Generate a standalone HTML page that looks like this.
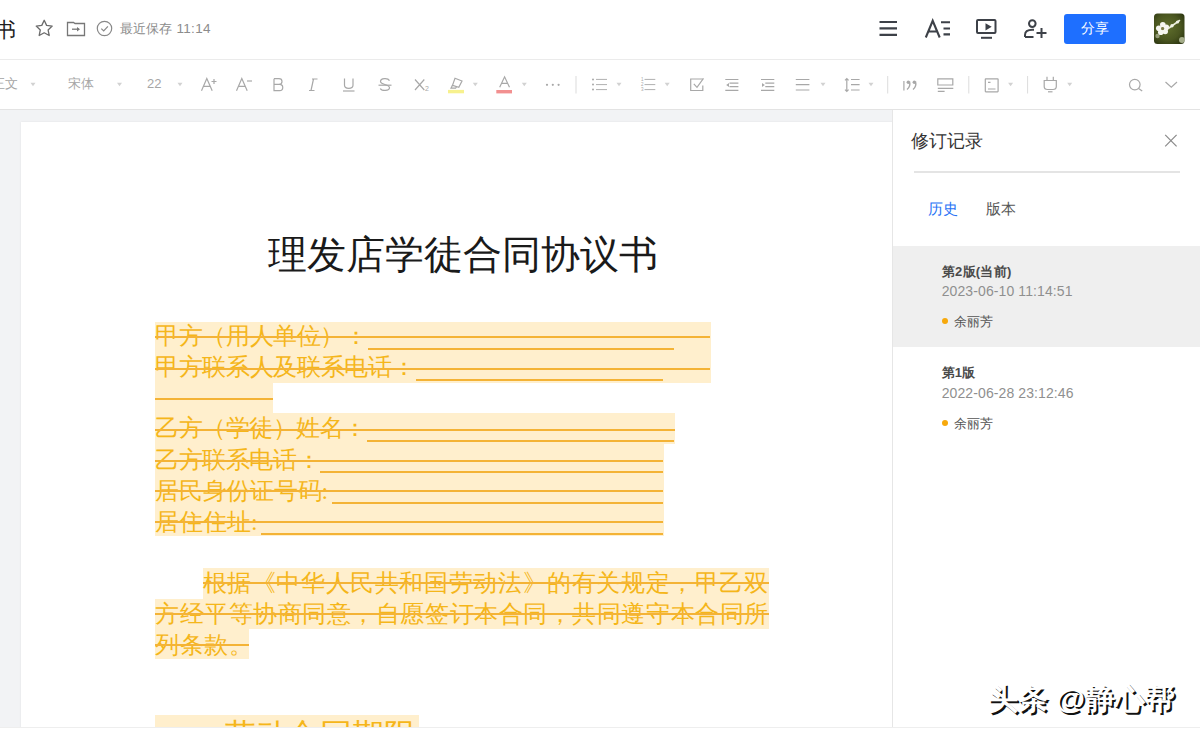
<!DOCTYPE html>
<html><head><meta charset="utf-8">
<style>
*{box-sizing:border-box;margin:0;padding:0}
html,body{width:1200px;height:737px;overflow:hidden;background:#fff;font-family:"Liberation Sans",sans-serif}
.a{position:absolute;white-space:nowrap}
#hdr{position:absolute;left:0;top:0;width:1200px;height:60px;background:#fff;border-bottom:1px solid #ebebeb}
#tb{position:absolute;left:0;top:60px;width:1200px;height:50px;background:#fff;border-bottom:1px solid #e3e3e3}
#main{position:absolute;left:0;top:110px;width:892px;height:617px;background:#f2f3f5;overflow:hidden}
#page{position:absolute;left:21px;top:12px;width:900px;height:700px;background:#fff;box-shadow:0 0 2px rgba(0,0,0,.08)}
#panel{position:absolute;left:892px;top:110px;width:308px;height:617px;background:#fff;border-left:1px solid #e6e6e6}
#foot{position:absolute;left:0;top:727px;width:1200px;height:10px;background:#fff;border-top:1px solid #eeeeee}
.tbt{font-size:13px;color:#a6a6a6;line-height:16px;top:76px}
.doc{font-family:"Liberation Serif",serif;color:#f5b61a;font-size:23.7px;line-height:23.7px}
.hl{position:absolute;background:#ffefcd}
.ln{position:absolute;height:1.6px;background:#f4b336}
.pt{font-size:13px;line-height:16px}
</style></head><body>
<div id="hdr"></div>
<div id="tb"></div>
<div id="main"><div id="page"></div></div>

<!-- document content (page coordinates) -->
<div class="a" style="left:268px;top:236px;font-family:'Liberation Serif',serif;font-size:38.8px;line-height:38.8px;color:#1a1a1a">理发店学徒合同协议书</div>

<div class="hl" style="left:154.5px;top:321.5px;width:556px;height:61px"></div>
<div class="hl" style="left:154.5px;top:382.5px;width:118px;height:30.5px"></div>
<div class="hl" style="left:154.5px;top:413px;width:520px;height:30.5px"></div>
<div class="hl" style="left:154.5px;top:443.5px;width:509px;height:92.5px"></div>

<div class="a doc" style="left:155px;top:325.2px;letter-spacing:-0.37px">甲方（用人单位）：</div>
<div class="a doc" style="left:155px;top:356.2px;letter-spacing:-0.32px">甲方联系人及联系电话：</div>
<div class="a doc" style="left:155px;top:417px;letter-spacing:-0.44px">乙方（学徒）姓名：</div>
<div class="a doc" style="left:155px;top:448.5px;letter-spacing:-0.4px">乙方联系电话：</div>
<div class="a doc" style="left:155px;top:480px;letter-spacing:-0.2px">居民身份证号码:</div>
<div class="a doc" style="left:155px;top:511px;letter-spacing:0px">居住住址:</div>

<div class="ln" style="left:155px;top:336px;width:555px"></div>
<div class="ln" style="left:367.7px;top:348px;width:306px"></div>
<div class="ln" style="left:155px;top:368px;width:555px"></div>
<div class="ln" style="left:415.5px;top:379px;width:247.5px"></div>
<div class="ln" style="left:155px;top:398px;width:117.7px;height:2px"></div>
<div class="ln" style="left:155px;top:429px;width:519.8px"></div>
<div class="ln" style="left:367.2px;top:440px;width:307px"></div>
<div class="ln" style="left:155px;top:460px;width:508px"></div>
<div class="ln" style="left:319.8px;top:471px;width:343.2px"></div>
<div class="ln" style="left:155px;top:490px;width:508px"></div>
<div class="ln" style="left:332.4px;top:502px;width:330.6px"></div>
<div class="ln" style="left:155px;top:521px;width:508px"></div>
<div class="ln" style="left:260.8px;top:533px;width:402.2px"></div>

<div class="hl" style="left:202.6px;top:568px;width:566px;height:30.5px"></div>
<div class="hl" style="left:154.5px;top:598.5px;width:614.2px;height:30.5px"></div>
<div class="hl" style="left:154.5px;top:629px;width:94.5px;height:30px"></div>
<div class="a doc" style="left:202.6px;top:572px;letter-spacing:0.61px">根据《中华人民共和国劳动法》的有关规定，甲乙双</div>
<div class="a doc" style="left:155px;top:603px;letter-spacing:0.55px">方经平等协商同意，自愿签订本合同，共同遵守本合同所</div>
<div class="a doc" style="left:155px;top:634px;letter-spacing:0.55px">列条款。</div>
<div class="ln" style="left:202.6px;top:582px;width:566px"></div>
<div class="ln" style="left:155px;top:613px;width:613.7px"></div>
<div class="ln" style="left:155px;top:644px;width:94px"></div>

<div class="hl" style="left:155px;top:714.5px;width:264px;height:20px"></div>
<div class="a doc" style="left:223.7px;top:720px;font-size:31.8px;line-height:31.8px">劳动合同期限</div>

<div id="foot"></div>

<!-- header -->
<div class="a" style="left:-5.5px;top:18.5px;font-size:20.5px;line-height:22px;color:#1f1f1f">书</div>
<div class="a" style="left:119.5px;top:21px;font-size:13px;line-height:16px;color:#8c8c8c">最近保存</div><div class="a" style="left:176.5px;top:21px;font-size:13.5px;line-height:16px;color:#8c8c8c;letter-spacing:0.3px">11:14</div>
<div class="a" style="left:1064px;top:13.5px;width:62px;height:30.5px;background:#1e6fff;border-radius:3px"></div>
<div class="a" style="left:1081px;top:21px;font-size:13.5px;line-height:16px;color:#fff">分享</div>

<!-- toolbar text -->
<div class="a tbt" style="left:-8px">正文</div>
<div class="a tbt" style="left:68px">宋体</div>
<div class="a tbt" style="left:147px">22</div>

<!-- panel -->
<div id="panel"></div>
<div class="a" style="left:911px;top:131px;font-size:18px;line-height:20px;color:#333">修订记录</div>
<div class="a" style="left:914px;top:171px;width:266px;height:1.5px;background:#e4e4e4"></div>
<div class="a" style="left:927.5px;top:200px;font-size:15px;line-height:18px;color:#2a73f5">历史</div>
<div class="a" style="left:985.5px;top:200px;font-size:15px;line-height:18px;color:#555">版本</div>
<div class="a" style="left:893px;top:246.3px;width:307px;height:101px;background:#efefef"></div>
<div class="a pt" style="left:941.7px;top:263.5px;font-weight:bold;color:#4a4a4a;letter-spacing:0.3px">第2版(当前)</div>
<div class="a pt" style="left:941.7px;top:282.5px;font-size:14px;color:#8f8f8f;letter-spacing:0.1px">2023-06-10 11:14:51</div>
<div class="a" style="left:941.5px;top:318px;width:6.4px;height:6.4px;border-radius:50%;background:#f7a90c"></div>
<div class="a pt" style="left:954px;top:313.5px;color:#555">余丽芳</div>
<div class="a pt" style="left:941.7px;top:364.5px;font-weight:bold;color:#4a4a4a">第1版</div>
<div class="a pt" style="left:941.7px;top:384.5px;font-size:14px;color:#8f8f8f;letter-spacing:0.1px">2022-06-28 23:12:46</div>
<div class="a" style="left:941.5px;top:420px;width:6.4px;height:6.4px;border-radius:50%;background:#f7a90c"></div>
<div class="a pt" style="left:954px;top:415.5px;color:#555">余丽芳</div>

<!-- watermark -->
<div class="a" style="left:987.5px;top:683px;font-size:30px;line-height:32px;font-weight:bold;color:#fff;text-shadow:2px 2px 0 #111">头条 @静心帮</div>

<!-- icons overlay -->
<svg class="a" style="left:0;top:0" width="1200" height="737" viewBox="0 0 1200 737" fill="none">
 <!-- header left icons -->
 <path d="M44.2 20.3 L46.6 25.4 L52.2 26.1 L48.1 29.9 L49.2 35.5 L44.2 32.8 L39.2 35.5 L40.3 29.9 L36.2 26.1 L41.8 25.4 Z" stroke="#6b6b6b" stroke-width="1.3" stroke-linejoin="round"/>
 <path d="M67.5 22.5 H73.5 L75 23.5 H84.5 V35.5 H67.5 Z" stroke="#777" stroke-width="1.3"/>
 <path d="M72 29.2 H79" stroke="#777" stroke-width="1.3"/><path d="M77 27 L80 29.2 L77 31.4 Z" fill="#777"/>
 <circle cx="104.5" cy="28.5" r="7.2" stroke="#888" stroke-width="1.2"/>
 <path d="M101.3 28.6 L103.7 31 L107.9 26.3" stroke="#888" stroke-width="1.2"/>
 <!-- header right icons -->
 <g stroke="#3d4148" stroke-width="2">
  <path d="M879.5 22 H897 M879.5 28.3 H897 M879.5 34.9 H897" stroke-width="2.2"/>
  <path d="M925.8 37.5 L932.7 20.8 L939.7 37.5 M928 31.5 H937.5" stroke-width="2.1"/>
  <path d="M941 22.2 H950 M943.5 28.5 H950 M943.5 34.4 H950" stroke-width="2.1"/>
  <rect x="977" y="20" width="18.5" height="13" rx="1"/>
  <path d="M981 37.8 H992"/>
  <circle cx="1032.3" cy="23.6" r="3.3"/>
  <path d="M1025 37 V35 C1025 31.5 1028 29.8 1032.5 29.8 H1034 M1025 37 H1033.5"/>
  <path d="M1036.5 33 H1046.5 M1041.5 28 V38"/>
 </g>
 <path d="M985.5 23.2 L991.7 26.8 L985.5 30.4 Z" fill="#3d4148"/>
 <!-- avatar -->
 <defs><radialGradient id="avg" cx="0.45" cy="0.45" r="0.7"><stop offset="0" stop-color="#5f6e2c"/><stop offset="0.6" stop-color="#4a5620"/><stop offset="1" stop-color="#2a3310"/></radialGradient>
 <clipPath id="avc"><rect x="1154" y="13.5" width="30.5" height="30.5" rx="3.5"/></clipPath></defs>
 <rect x="1154" y="13.5" width="30.5" height="30.5" rx="3.5" fill="url(#avg)"/>
 <g clip-path="url(#avc)">
  <g fill="#f6f6f0">
   <circle cx="1162.8" cy="24.8" r="2.8"/><circle cx="1166.3" cy="27.4" r="2.8"/><circle cx="1165.2" cy="31.5" r="2.8"/>
   <circle cx="1160.8" cy="32.2" r="2.8"/><circle cx="1158.8" cy="28.2" r="2.8"/>
  </g>
  <circle cx="1162.7" cy="28.6" r="1.5" fill="#7d7d45"/>
  <circle cx="1157.5" cy="36" r="2.2" fill="#c9cfb4" opacity="0.6"/>
  <path d="M1169 28 L1179.5 20.5" stroke="#e8ecd8" stroke-width="1.6" stroke-linecap="round"/>
  <g fill="#f0f2e6"><circle cx="1172" cy="25.8" r="1.7"/><circle cx="1177.5" cy="22" r="1.6"/></g>
  <circle cx="1182" cy="40" r="3" fill="#c2c9a8" opacity="0.8"/>
 </g>
 <!-- toolbar -->
 <g fill="#d2d2d2">
  <path d="M30.5 82.8 h5 l-2.5 3.5 z"/><path d="M117.0 82.8 h5 l-2.5 3.5 z"/><path d="M177.5 82.8 h5 l-2.5 3.5 z"/>
  <path d="M472.8 82.8 h5 l-2.5 3.5 z"/><path d="M521.8 82.8 h5 l-2.5 3.5 z"/><path d="M616.5 82.8 h5 l-2.5 3.5 z"/>
  <path d="M664.7 82.8 h5 l-2.5 3.5 z"/><path d="M820.5 82.8 h5 l-2.5 3.5 z"/><path d="M868.5 82.8 h5 l-2.5 3.5 z"/>
  <path d="M1008.1 82.8 h5 l-2.5 3.5 z"/><path d="M1067.2 82.8 h5 l-2.5 3.5 z"/>
 </g>
 <g stroke="#a8a8a8" stroke-width="1.2" fill="none">
  <!-- A+ -->
  <path d="M201.5 90.7 L206.8 78.5 L212.2 90.7 M203.3 86.3 H210.4"/>
  <path d="M211.5 81.5 H216.5 M214 79 V84"/>
  <!-- A- -->
  <path d="M236.5 90.7 L241.8 78.5 L247.2 90.7 M238.3 86.3 H245.4"/>
  <path d="M247 81 H252"/>
  <!-- B -->
  <path d="M274 78.7 H279 C283 78.7 283 84.3 279 84.3 H274 M274 84.3 H279.6 C283.8 84.3 283.8 90.6 279.6 90.6 H274 V78.7"/>
  <!-- I -->
  <path d="M313.5 79 L311 90.5 M309 90.5 H314.5 M312 79 H317.5"/>
  <!-- U -->
  <path d="M344.5 78.5 V85.3 C344.5 89.3 353 89.3 353 85.3 V78.5"/>
  <path d="M343 91 H354.5"/>
  <!-- S -->
  <path d="M389.5 80.6 C388 77.8 380.5 78 380.5 81.6 C380.5 85 389.5 84 389.5 87.8 C389.5 91.2 381.5 91.2 380.3 88.5"/>
  <path d="M378.5 85.2 H391.5"/>
  <!-- X2 -->
  <path d="M415 79.5 L424.3 90 M424.3 79.5 L415 90"/>
  <!-- highlighter -->
  <path d="M455 78.2 L462 81 L458.8 87.3 L452.5 85.3 Z"/>
  <path d="M452.5 85.3 L451 88.2 L455.6 88.2 L456.5 86.8"/>
  <!-- A -->
  <path d="M499.7 87.3 L504.6 76.8 L509.5 87.3 M501.5 83.3 H507.8"/>
  <!-- list bullets -->
  <path d="M596 79.4 H607 M596 84.6 H607 M596 89.6 H607" stroke-width="1" stroke="#b0b0b0"/>
  <path d="M644.5 79.4 H655.3 M644.5 84.6 H655.3 M644.5 89.6 H655.3" stroke-width="1" stroke="#b0b0b0"/>
  <!-- checkbox -->
  <path d="M702.8 79 H690.7 V90.5 H702.8 V85.5"/>
  <path d="M693.8 83.8 L697 87.3 L703.5 78.3"/>
  <!-- outdent -->
  <path d="M725.3 79.5 H738.4 M729.5 83.2 H738.4 M729.5 86.7 H738.4 M725.3 90.4 H738.4"/>
  <!-- indent -->
  <path d="M761 79.5 H774.3 M765.3 83.2 H774.3 M765.3 86.7 H774.3 M761 90.4 H774.3"/>
  <!-- align -->
  <path d="M795.8 79.5 H809.4 M795.8 84.7 H809.4 M795.8 90 H809.4"/>
  <!-- line spacing -->
  <path d="M851 79.5 H859.6 M851 84.7 H859.6 M851 90 H859.6"/>
  <path d="M846.8 78.5 V91.5 M845 80.3 L846.8 78.5 L848.6 80.3 M845 89.7 L846.8 91.5 L848.6 89.7"/>
  <!-- quote sep etc -->
  <path d="M903.9 81 V90.5"/>
  <!-- block -->
  <path d="M937.8 78.8 H952.8 V85 H937.8 Z" />
  <path d="M937.8 88.3 H953.3 M937.8 91.4 H944.6"/>
  <!-- box -->
  <rect x="985.3" y="78.8" width="12.8" height="13" rx="0.5"/>
  <path d="M988 82.3 H990.5 M988 89 H995.5"/>
  <!-- plugin -->
  <path d="M1047 76.8 V80.3 M1053.3 76.8 V80.3"/>
  <path d="M1044.2 80.5 H1056.3 V86.5 C1056.3 88.5 1055 89.5 1053 89.5 H1047.5 C1045.5 89.5 1044.2 88.5 1044.2 86.5 Z"/>
  <path d="M1048 91.8 H1052.5"/>
  <!-- search -->
  <circle cx="1134.8" cy="84.6" r="5.3"/>
  <path d="M1138.6 88.4 L1142.2 91"/>
  <!-- chevron -->
  <path d="M1165.5 82 L1171.3 87.2 L1177 82"/>
  <!-- close X panel -->
  <path d="M1165.2 134.8 L1176.6 146.4 M1176.6 134.8 L1165.2 146.4" stroke="#8a8a8a"/>
 </g>
 <g fill="#a8a8a8">
  <circle cx="593" cy="79.4" r="1"/><circle cx="593" cy="84.6" r="1"/><circle cx="593" cy="89.6" r="1"/>
  <path d="M729 83 V87 L726.2 85 Z"/><path d="M762 83 V87 L764.8 85 Z"/>
  <circle cx="547" cy="84.8" r="1.1"/><circle cx="552.8" cy="84.8" r="1.1"/><circle cx="558.6" cy="84.8" r="1.1"/>
  
 </g>
 <text x="425" y="91" font-size="7" fill="#a8a8a8" font-family="Liberation Sans">2</text>
 <text x="641" y="81.2" font-size="4.5" fill="#a8a8a8" font-family="Liberation Sans">1</text>
 <text x="641" y="86.4" font-size="4.5" fill="#a8a8a8" font-family="Liberation Sans">2</text>
 <text x="641" y="91.4" font-size="4.5" fill="#a8a8a8" font-family="Liberation Sans">3</text>
 <circle cx="908.3" cy="82.3" r="1.7" fill="#a8a8a8"/><circle cx="914.3" cy="82.3" r="1.7" fill="#a8a8a8"/><path d="M909.5 81.5 C910.3 84.5 909.5 87.5 907 89.5 M915.5 81.5 C916.3 84.5 915.5 87.5 913 89.5" stroke="#a8a8a8" stroke-width="1.4" fill="none"/>
 <rect x="448" y="89.9" width="16" height="3.4" fill="#f7f18e"/>
 <rect x="496.3" y="90" width="15.7" height="3.4" fill="#f29090"/>
 <!-- separators -->
 <g fill="#dcdcdc">
  <rect x="575.5" y="76" width="1" height="17.5"/>
  <rect x="887.2" y="76" width="1" height="17.5"/>
  <rect x="968.3" y="76" width="1" height="17.5"/>
  <rect x="1027.1" y="76" width="1" height="17.5"/>
 </g>
</svg>
</body></html>
